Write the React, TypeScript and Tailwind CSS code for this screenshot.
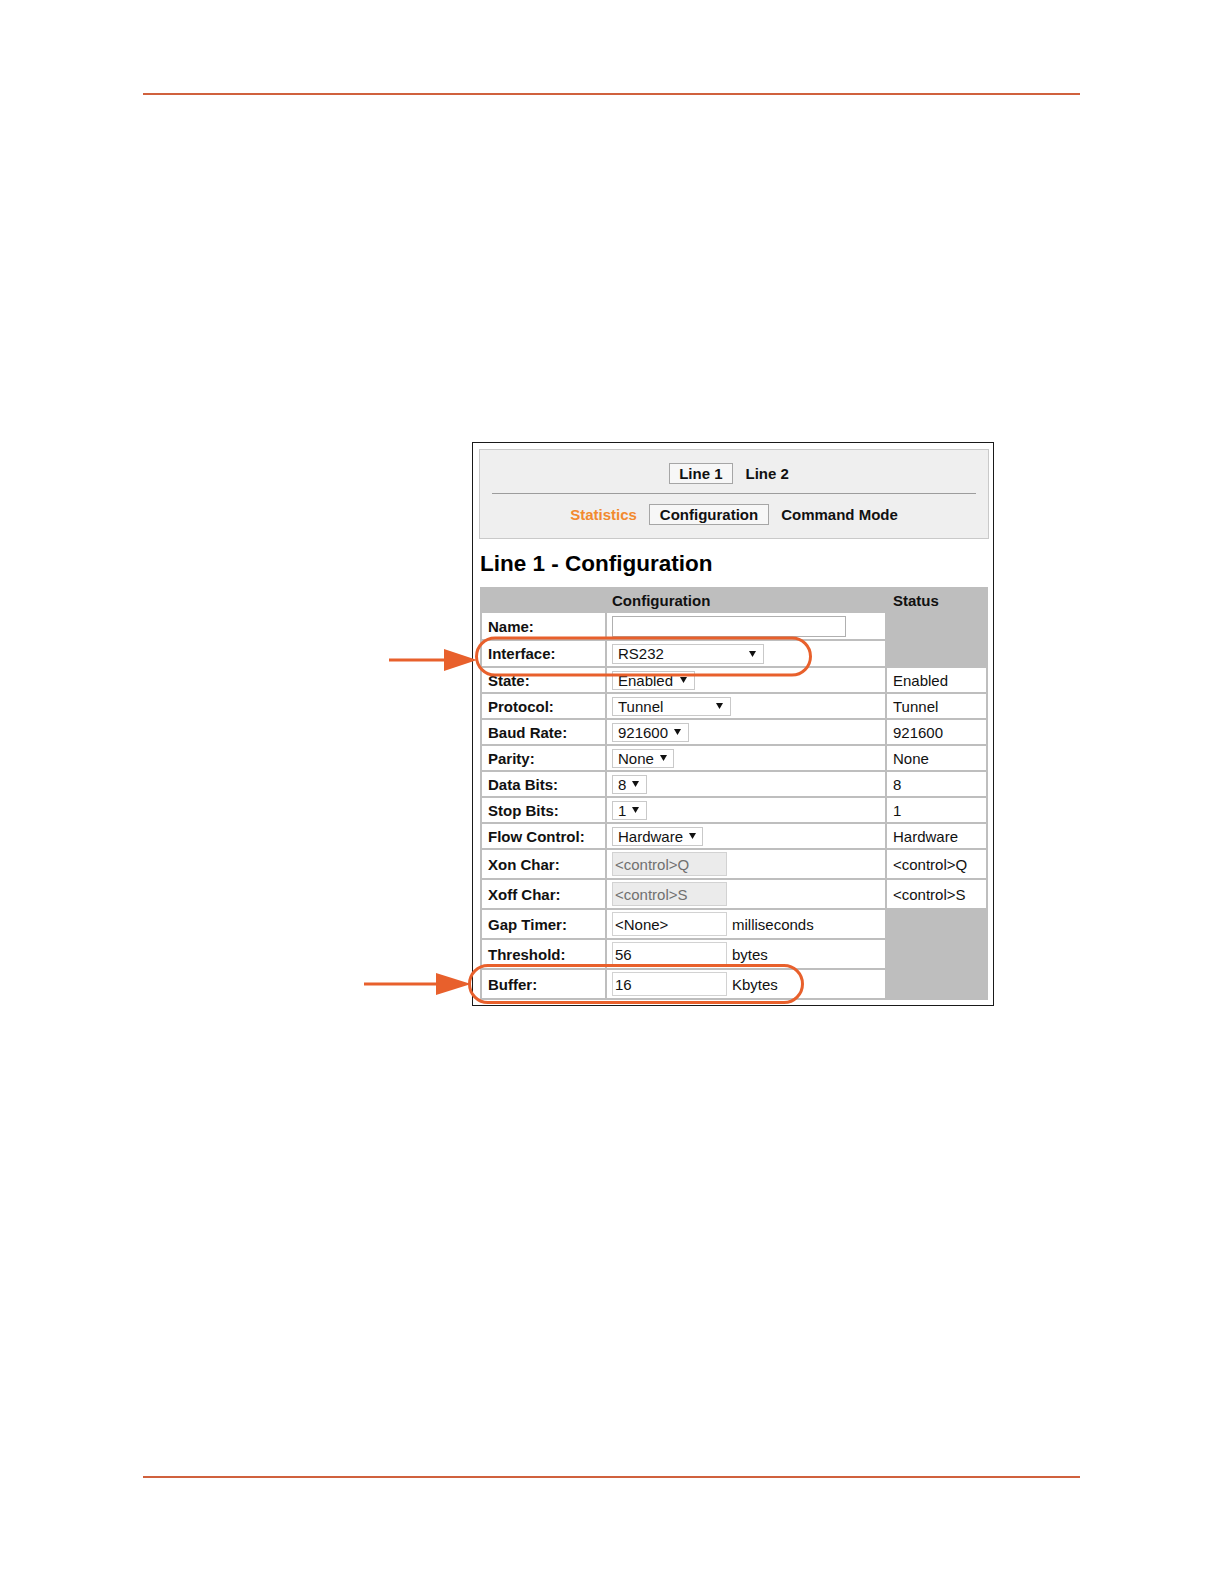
import React from 'react'

// select rows: label, current value, box width, status text
const SELECT_ROWS: Array<{ label: string; value: string; w: string; status: string }> = [
  { label: 'State:',        value: 'Enabled',  w: 'w-[83px]',  status: 'Enabled' },
  { label: 'Protocol:',     value: 'Tunnel',   w: 'w-[119px]', status: 'Tunnel' },
  { label: 'Baud Rate:',    value: '921600',   w: 'w-[77px]',  status: '921600' },
  { label: 'Parity:',       value: 'None',     w: 'w-[62px]',  status: 'None' },
  { label: 'Data Bits:',    value: '8',        w: 'w-[35px]',  status: '8' },
  { label: 'Stop Bits:',    value: '1',        w: 'w-[35px]',  status: '1' },
  { label: 'Flow Control:', value: 'Hardware', w: 'w-[91px]',  status: 'Hardware' },
]

const CHAR_ROWS = [
  { label: 'Xon Char:',  value: '<control>Q' },
  { label: 'Xoff Char:', value: '<control>S' },
]

const UNIT_ROWS = [
  { label: 'Gap Timer:', value: '<None>', unit: 'milliseconds' },
  { label: 'Threshold:', value: '56',     unit: 'bytes' },
  { label: 'Buffer:',    value: '16',     unit: 'Kbytes' },
]

function Caret() {
  return (
    <svg width="7" height="6" viewBox="0 0 7 6" className="ml-[6px] shrink-0">
      <polygon points="0,0 7,0 3.5,6" fill="#111" />
    </svg>
  )
}

function Select({ value, w, h = 'h-[19px]' }: { value: string; w: string; h?: string }) {
  return (
    <div className={`${w} ${h} flex items-center justify-between border border-[#c9c9c9] bg-white pl-[5px] pr-[7px] text-[#111]`}>
      <span className="leading-none">{value}</span>
      <Caret />
    </div>
  )
}

function Label({ children }: { children: React.ReactNode }) {
  return <td className="bg-white px-[6px] py-0 align-middle font-bold text-[#111]">{children}</td>
}

function Annotations() {
  const c = '#e8602c'
  return (
    <svg className="pointer-events-none absolute left-0 top-0" width="1224" height="1584" viewBox="0 0 1224 1584">
      {/* interface */}
      <rect x="476.5" y="638" width="334" height="37" rx="18.5" fill="none" stroke={c} strokeWidth="3" />
      <line x1="389" y1="660" x2="450" y2="660" stroke={c} strokeWidth="3" />
      <polygon points="444,649 477,660 444,671" fill={c} />
      {/* buffer */}
      <rect x="469.5" y="965.5" width="333" height="37" rx="18.5" fill="none" stroke={c} strokeWidth="3" />
      <line x1="364" y1="984" x2="442" y2="984" stroke={c} strokeWidth="3" />
      <polygon points="436,973 471,984 436,995" fill={c} />
    </svg>
  )
}

export default function App() {
  return (
    <div className="relative h-[1584px] w-[1224px] bg-white pt-[93px] font-['Liberation_Sans',Arial,sans-serif]">
      <div className="ml-[143px] h-[2px] w-[937px] bg-[#d0613d]" />

      {/* screenshot frame */}
      <div className="ml-[472px] mt-[347px] w-[522px] border border-[#1a1a1a] pb-[5px] pl-[6px] pr-[4px] pt-[6px] text-[15px]">
        <div className="border border-[#c9c9c9] bg-[#efefef] pb-[13px] pt-[13px]">
          <div className="flex items-center justify-center gap-[13px] pr-[10px] font-bold text-[#111]">
            <span className="h-[21px] border border-[#a6a6a6] bg-[#f7f7f7] px-[9px] leading-[19px]">Line 1</span>
            <span className="leading-[19px]">Line 2</span>
          </div>
          <div className="mx-[12px] mb-[10px] mt-[9px] h-px bg-[#9c9c9c]" />
          <div className="flex items-center justify-center gap-[12px] font-bold text-[#111]">
            <span className="leading-[19px] text-[#f28a2e]">Statistics</span>
            <span className="h-[21px] border border-[#a6a6a6] bg-[#f7f7f7] px-[10px] leading-[19px]">Configuration</span>
            <span className="leading-[19px]">Command Mode</span>
          </div>
        </div>

        <h1 className="mb-[10px] ml-px mt-[12px] text-[22.5px] font-bold leading-[26px] text-black">Line 1 - Configuration</h1>

        <table className="ml-px w-[508px] table-fixed border-separate border-spacing-[2px] bg-[#bebebe] text-[15px] leading-[17px]">
          <colgroup>
            <col className="w-[123px]" />
            <col className="w-[278px]" />
            <col className="w-[99px]" />
          </colgroup>
          <tbody>
            <tr className="h-[22px]">
              <th />
              <th className="px-[5px] py-0 text-left font-bold text-[#111]">Configuration</th>
              <th rowSpan={3} className="px-[6px] pb-0 pt-[3px] text-left align-top font-bold text-[#111]">Status</th>
            </tr>
            <tr className="h-[26px]">
              <Label>Name:</Label>
              <td className="bg-white px-[5px] py-0 align-middle">
                <div className="h-[21px] w-[234px] border border-[#b0b0b0] bg-white" />
              </td>
            </tr>
            <tr className="h-[25px]">
              <Label>Interface:</Label>
              <td className="bg-white px-[5px] py-0 align-middle">
                <Select value="RS232" w="w-[152px]" h="h-[20px]" />
              </td>
            </tr>
            {SELECT_ROWS.map(r => (
              <tr key={r.label} className="h-[24px]">
                <Label>{r.label}</Label>
                <td className="bg-white px-[5px] py-0 align-middle">
                  <Select value={r.value} w={r.w} />
                </td>
                <td className="bg-white px-[6px] py-0 align-middle text-[#111]">{r.status}</td>
              </tr>
            ))}
            {CHAR_ROWS.map(r => (
              <tr key={r.label} className="h-[28px]">
                <Label>{r.label}</Label>
                <td className="bg-white px-[5px] py-0 align-middle">
                  <div className="flex h-[24px] w-[115px] items-center border border-[#d2d2d2] bg-[#ebebeb] pl-[2px] text-[#707070]">
                    {r.value}
                  </div>
                </td>
                <td className="bg-white px-[6px] py-0 align-middle text-[#111]">{r.value}</td>
              </tr>
            ))}
            {UNIT_ROWS.map((r, i) => (
              <tr key={r.label} className="h-[28px]">
                <Label>{r.label}</Label>
                <td className="bg-white px-[5px] py-0 align-middle">
                  <div className="flex items-center gap-[5px] text-[#111]">
                    <div className="flex h-[24px] w-[115px] items-center border border-[#d2d2d2] bg-white pl-[2px]">
                      {r.value}
                    </div>
                    <span>{r.unit}</span>
                  </div>
                </td>
                {i === 0 && <td rowSpan={3} />}
              </tr>
            ))}
          </tbody>
        </table>
      </div>

      <div className="ml-[143px] mt-[470px] h-[2px] w-[937px] bg-[#d0613d]" />

      <Annotations />
    </div>
  )
}
